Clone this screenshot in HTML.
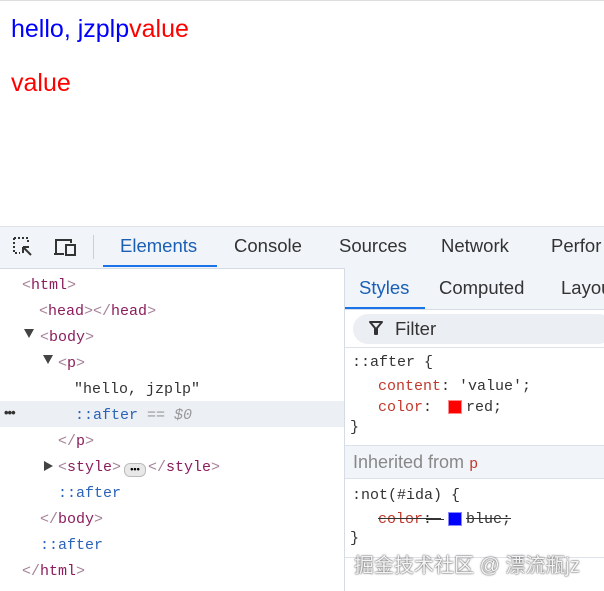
<!DOCTYPE html>
<html><head><style>
body{margin:0;width:604px;height:591px;overflow:hidden;background:#fff;font-family:"Liberation Sans","Noto Sans CJK SC",sans-serif;position:relative}
.a{position:absolute;white-space:pre}
.m{font-family:"Liberation Mono","Noto Sans CJK SC",monospace;font-size:15px}
.t{color:#8b1d5c}.b{color:#a58197}.ps{color:#2a63b8}
.tri{position:absolute;width:0;height:0;border-left:5px solid transparent;border-right:5px solid transparent;border-top:9px solid #444}
.trr{position:absolute;width:0;height:0;border-top:5px solid transparent;border-bottom:5px solid transparent;border-left:9px solid #444}
</style></head><body>
<div style="position:absolute;left:0;top:0;width:604px;height:1px;background:#ddd"></div>
<div class="a" style="left:11px;top:15px;font-size:25px;color:#0000ee"><span style="color:#0000ff">hello, jzplp</span><span style="color:#f00">value</span></div>
<div class="a" style="left:11px;top:69px;font-size:25px;color:#f00">value</div>

<!-- toolbar -->
<div style="position:absolute;left:0;top:226px;width:604px;height:41px;background:#f1f4f9;border-top:1px solid #dfe3ea;border-bottom:1px solid #d6dce6"></div>
<svg class="a" style="left:12px;top:236px" width="22" height="22" viewBox="0 0 22 22" fill="none" stroke="#333" stroke-width="2"><path d="M2 2h14v6M2 2v15h6" stroke-dasharray="2 2"/><path d="M11 11l8 8M11 11h6M11 11v6" /></svg>
<svg class="a" style="left:53px;top:237px" width="26" height="20" viewBox="0 0 26 20" fill="none" stroke="#333" stroke-width="2"><path d="M3 17V3h15v3"/><path d="M1 17h10"/><rect x="13" y="8" width="9" height="10"/></svg>
<div style="position:absolute;left:93px;top:235px;width:1px;height:24px;background:#ccd"></div>
<div class="a" style="left:120px;top:235px;font-size:18.5px;color:#1a5fb4">Elements</div>
<div style="position:absolute;left:103px;top:265px;width:114px;height:2px;background:#1a73e8"></div>
<div class="a" style="left:234px;top:235px;font-size:18.5px;color:#333">Console</div>
<div class="a" style="left:339px;top:235px;font-size:18.5px;color:#333">Sources</div>
<div class="a" style="left:441px;top:235px;font-size:18.5px;color:#333">Network</div>
<div class="a" style="left:551px;top:235px;font-size:18.5px;color:#333">Perfor</div>

<!-- left tree -->
<div style="position:absolute;left:0;top:401px;width:344px;height:26px;background:#eceff3"></div>
<div class="a" style="left:4px;top:405px;font-size:13px;color:#333;font-weight:bold;letter-spacing:-1px">•••</div>
<div class="a m" style="left:22px;top:277px"><span class="b">&lt;</span><span class="t">html</span><span class="b">&gt;</span></div>
<div class="a m" style="left:39px;top:303px"><span class="b">&lt;</span><span class="t">head</span><span class="b">&gt;&lt;/</span><span class="t">head</span><span class="b">&gt;</span></div>
<div class="tri" style="left:24px;top:329px"></div>
<div class="a m" style="left:40px;top:329px"><span class="b">&lt;</span><span class="t">body</span><span class="b">&gt;</span></div>
<div class="tri" style="left:43px;top:355px"></div>
<div class="a m" style="left:58px;top:355px"><span class="b">&lt;</span><span class="t">p</span><span class="b">&gt;</span></div>
<div class="a m" style="left:74px;top:381px;color:#333">"hello, jzplp"</div>
<div class="a m" style="left:75px;top:407px"><span class="ps">::after</span> <span style="color:#999;font-style:italic">== $0</span></div>
<div class="a m" style="left:58px;top:433px"><span class="b">&lt;/</span><span class="t">p</span><span class="b">&gt;</span></div>
<div class="trr" style="left:44px;top:461px"></div>
<div class="a m" style="left:58px;top:459px"><span class="b">&lt;</span><span class="t">style</span><span class="b">&gt;</span></div>
<div style="position:absolute;left:124px;top:463px;width:20px;height:12px;border:1px solid #bbb;border-radius:6px;background:#e8e8e8;font-size:9px;line-height:11px;text-align:center;font-weight:bold">•••</div>
<div class="a m" style="left:148px;top:459px"><span class="b">&lt;/</span><span class="t">style</span><span class="b">&gt;</span></div>
<div class="a m ps" style="left:58px;top:485px">::after</div>
<div class="a m" style="left:40px;top:511px"><span class="b">&lt;/</span><span class="t">body</span><span class="b">&gt;</span></div>
<div class="a m ps" style="left:40px;top:537px">::after</div>
<div class="a m" style="left:22px;top:563px"><span class="b">&lt;/</span><span class="t">html</span><span class="b">&gt;</span></div>

<!-- right pane -->
<div style="position:absolute;left:344px;top:268px;width:1px;height:323px;background:#d6dce6"></div>
<div style="position:absolute;left:345px;top:268px;width:259px;height:41px;background:#f1f4f9;border-bottom:1px solid #d6dce6"></div>
<div class="a" style="left:359px;top:277px;font-size:18.5px;color:#1a5fb4">Styles</div>
<div style="position:absolute;left:345px;top:307px;width:80px;height:2px;background:#1a73e8"></div>
<div class="a" style="left:439px;top:277px;font-size:18.5px;color:#333">Computed</div>
<div class="a" style="left:561px;top:277px;font-size:18.5px;color:#333">Layou</div>
<div style="position:absolute;left:345px;top:310px;width:259px;height:37px;background:#fff;border-bottom:1px solid #dde2ea"></div>
<div style="position:absolute;left:353px;top:314px;width:260px;height:30px;border-radius:15px;background:#ebeef3"></div>
<svg class="a" style="left:369px;top:321px" width="14" height="15" viewBox="0 0 14 15"><path d="M1 1h12L8 7v6H6V7z" fill="none" stroke="#333" stroke-width="2" stroke-linejoin="round"/></svg>
<div class="a" style="left:395px;top:318px;font-size:18.5px;color:#333">Filter</div>
<div class="a m" style="left:352px;top:354px;color:#333">::after {</div>
<div class="a m" style="left:378px;top:378px"><span style="color:#c0392b">content</span><span style="color:#333">: 'value';</span></div>
<div class="a m" style="left:378px;top:399px"><span style="color:#c0392b">color</span><span style="color:#333">:  </span></div>
<div style="position:absolute;left:448px;top:400px;width:12px;height:12px;background:#f00;border:1px solid #f88"></div>
<div class="a m" style="left:466px;top:399px;color:#333">red;</div>
<div class="a m" style="left:350px;top:419px;color:#333">}</div>
<div style="position:absolute;left:345px;top:445px;width:259px;height:32px;background:#f1f4f9;border-top:1px solid #dde2ea;border-bottom:1px solid #dde2ea"></div>
<div class="a" style="left:353px;top:452px;font-size:18px;color:#888">Inherited from <span class="m" style="color:#c0392b">p</span></div>
<div class="a m" style="left:352px;top:487px;color:#333">:not(#ida) {</div>
<div class="a m" style="left:378px;top:511px;text-decoration:line-through;color:#333"><span style="color:#c0392b">color</span>: </div>
<div style="position:absolute;left:426px;top:519px;width:18px;height:1px;background:#333"></div>
<div style="position:absolute;left:448px;top:512px;width:12px;height:12px;background:#00f;border:1px solid #88f"></div>
<div class="a m" style="left:466px;top:511px;color:#333;text-decoration:line-through">blue;</div>
<div class="a m" style="left:350px;top:530px;color:#333">}</div>
<div style="position:absolute;left:345px;top:557px;width:259px;height:1px;background:#dde2ea"></div>
<div class="a" style="left:354px;top:549px;font-size:20px;color:#f4f4f4;text-shadow:0 0 2px #666,0 0 1px #444">掘金技术社区 @ 漂流瓶jz</div>
</body></html>
